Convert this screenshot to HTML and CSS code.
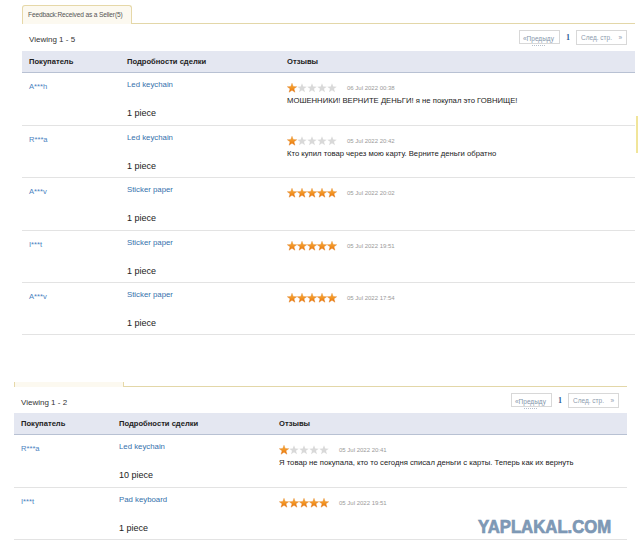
FILE: index.html
```html
<!DOCTYPE html>
<html lang="ru">
<head>
<meta charset="utf-8">
<title>Feedback</title>
<link rel="stylesheet" href="styles.css">
</head>
<body>
<svg class="defs" width="0" height="0" aria-hidden="true">
  <defs>
    <linearGradient id="gold" x1="0" y1="0" x2="0" y2="1">
      <stop offset="0" stop-color="#fbb540"/>
      <stop offset="1" stop-color="#e9750c"/>
    </linearGradient>
    <symbol id="star" viewBox="0 0 10 10">
      <polygon points="5,0.2 6.23,3.5 9.76,3.66 7,5.85 7.94,9.25 5,7.3 2.06,9.25 3,5.85 0.24,3.66 3.77,3.5"/>
    </symbol>
  </defs>
</svg>

<section class="panel panel-a">
  <div class="tabs"><div class="tab">Feedback:Received as a Seller(5)</div></div>
  <div class="bar">
    <div class="viewing">Viewing 1 - 5</div>
    <div class="pager">
      <span class="pg-prev">«Предыду</span>
      <span class="pg-num">1</span>
      <span class="pg-next"><span>След. стр.</span><span>»</span></span>
    </div>
  </div>
  <div class="thead"><div>Покупатель</div><div>Подробности сделки</div><div>Отзывы</div></div>

  <div class="row">
    <div class="buyer">A***h</div>
    <div class="deal"><a>Led keychain</a><div class="qty">1 piece</div></div>
    <div class="fb">
      <div class="fb-top"><span class="stars"><svg class="st on"><use href="#star"/></svg><svg class="st"><use href="#star"/></svg><svg class="st"><use href="#star"/></svg><svg class="st"><use href="#star"/></svg><svg class="st"><use href="#star"/></svg></span><span class="date">06 Jul 2022 00:38</span></div>
      <div class="comment">МОШЕННИКИ! ВЕРНИТЕ ДЕНЬГИ! я не покупал это ГОВНИЩЕ!</div>
    </div>
  </div>
  <div class="row">
    <div class="buyer">R***a</div>
    <div class="deal"><a>Led keychain</a><div class="qty">1 piece</div></div>
    <div class="fb">
      <div class="fb-top"><span class="stars"><svg class="st on"><use href="#star"/></svg><svg class="st"><use href="#star"/></svg><svg class="st"><use href="#star"/></svg><svg class="st"><use href="#star"/></svg><svg class="st"><use href="#star"/></svg></span><span class="date">05 Jul 2022 20:42</span></div>
      <div class="comment">Кто купил товар через мою карту. Верните деньги обратно</div>
    </div>
  </div>
  <div class="row">
    <div class="buyer">A***v</div>
    <div class="deal"><a>Sticker paper</a><div class="qty">1 piece</div></div>
    <div class="fb">
      <div class="fb-top"><span class="stars"><svg class="st on"><use href="#star"/></svg><svg class="st on"><use href="#star"/></svg><svg class="st on"><use href="#star"/></svg><svg class="st on"><use href="#star"/></svg><svg class="st on"><use href="#star"/></svg></span><span class="date">05 Jul 2022 20:02</span></div>
    </div>
  </div>
  <div class="row">
    <div class="buyer">I***t</div>
    <div class="deal"><a>Sticker paper</a><div class="qty">1 piece</div></div>
    <div class="fb">
      <div class="fb-top"><span class="stars"><svg class="st on"><use href="#star"/></svg><svg class="st on"><use href="#star"/></svg><svg class="st on"><use href="#star"/></svg><svg class="st on"><use href="#star"/></svg><svg class="st on"><use href="#star"/></svg></span><span class="date">05 Jul 2022 19:51</span></div>
    </div>
  </div>
  <div class="row">
    <div class="buyer">A***v</div>
    <div class="deal"><a>Sticker paper</a><div class="qty">1 piece</div></div>
    <div class="fb">
      <div class="fb-top"><span class="stars"><svg class="st on"><use href="#star"/></svg><svg class="st on"><use href="#star"/></svg><svg class="st on"><use href="#star"/></svg><svg class="st on"><use href="#star"/></svg><svg class="st on"><use href="#star"/></svg></span><span class="date">05 Jul 2022 17:54</span></div>
    </div>
  </div>
</section>

<section class="panel panel-b">
  <div class="tabs stub"><div class="tab"></div></div>
  <div class="bar">
    <div class="viewing">Viewing 1 - 2</div>
    <div class="pager">
      <span class="pg-prev">«Предыду</span>
      <span class="pg-num">1</span>
      <span class="pg-next"><span>След. стр.</span><span>»</span></span>
    </div>
  </div>
  <div class="thead"><div>Покупатель</div><div>Подробности сделки</div><div>Отзывы</div></div>

  <div class="row">
    <div class="buyer">R***a</div>
    <div class="deal"><a>Led keychain</a><div class="qty">10 piece</div></div>
    <div class="fb">
      <div class="fb-top"><span class="stars"><svg class="st on"><use href="#star"/></svg><svg class="st"><use href="#star"/></svg><svg class="st"><use href="#star"/></svg><svg class="st"><use href="#star"/></svg><svg class="st"><use href="#star"/></svg></span><span class="date">05 Jul 2022 20:41</span></div>
      <div class="comment">Я товар не покупала, кто то сегодня списал деньги с карты. Теперь как их вернуть</div>
    </div>
  </div>
  <div class="row">
    <div class="buyer">I***t</div>
    <div class="deal"><a>Pad keyboard</a><div class="qty">1 piece</div></div>
    <div class="fb">
      <div class="fb-top"><span class="stars"><svg class="st on"><use href="#star"/></svg><svg class="st on"><use href="#star"/></svg><svg class="st on"><use href="#star"/></svg><svg class="st on"><use href="#star"/></svg><svg class="st on"><use href="#star"/></svg></span><span class="date">05 Jul 2022 19:51</span></div>
    </div>
  </div>
</section>

<div class="edge-mark"></div>
<div class="watermark">YAPLAKAL.COM</div>
</body>
</html>
```
FILE: styles.css
```css
* { box-sizing: border-box; }

body {
  margin: 0;
  width: 640px;
  height: 559px;
  overflow: hidden;
  position: relative;
  background: #fff;
  color: #222;
  font-family: "Liberation Sans", Arial, sans-serif;
}

.defs { position: absolute; width: 0; height: 0; }

.panel { width: 613px; }
.panel-a { margin-left: 22px; padding-top: 5px; }
.panel-b { margin-left: 14px; margin-top: 47px; }

.tabs {
  display: flex;
  align-items: flex-end;
  height: 19px;
  border-bottom: 1px solid #e3d7a8;
}
.tab {
  width: 110px;
  height: 19px;
  margin-bottom: -1px;
  padding-left: 5px;
  border: 1px solid #e6d8a8;
  border-bottom: none;
  border-radius: 3px 3px 0 0;
  background: #fcf9f0;
  font-size: 6.6px;
  line-height: 17px;
  color: #555;
  white-space: nowrap;
  letter-spacing: -0.15px;
}
.tabs.stub { height: 5px; }
.tabs.stub .tab {
  height: 5px;
  border-top: none;
  border-radius: 0;
}

.bar {
  display: flex;
  justify-content: space-between;
  align-items: flex-start;
  height: 27px;
  padding: 0 8px 0 7px;
}
.panel-b .bar { height: 26px; }
.viewing {
  margin-top: 11px;
  font-size: 8px;
  line-height: 10px;
  color: #333;
}
.pager {
  display: flex;
  align-items: flex-start;
  margin-top: 6px;
}
.pg-prev {
  position: relative;
  display: block;
  width: 41px;
  height: 14px;
  padding: 3px 2px 0 3px;
  border: 1px solid #d8d8d8;
  font-size: 6.5px;
  line-height: 9px;
  color: #8595aa;
  white-space: nowrap;
}
.pg-prev::after {
  content: "";
  position: absolute;
  left: 12px;
  bottom: -3px;
  width: 13px;
  border-top: 1px dotted #b5bfcc;
}
.pg-num {
  margin: 3px 6px 0 6px;
  font-family: "Liberation Serif", serif;
  font-weight: bold;
  font-size: 8px;
  color: #2f5e97;
}
.pg-next {
  display: flex;
  justify-content: space-between;
  width: 51px;
  height: 15px;
  padding: 0 4px 0 4px;
  border: 1px solid #d8d8d8;
  font-size: 6.5px;
  line-height: 13px;
  color: #8d9bae;
}

.thead {
  display: grid;
  grid-template-columns: 98px 160px 1fr;
  height: 22px;
  background: #e4e7f1;
  border-bottom: 1px solid #b8c1d3;
  font-weight: bold;
  font-size: 7.6px;
  line-height: 21px;
  color: #222;
}
.thead > div { padding-left: 7px; }

.row {
  display: grid;
  grid-template-columns: 98px 160px 1fr;
  height: 52.3px;
  border-bottom: 1px solid #e3e3e3;
}
.thead + .row { height: 53px; }
.buyer {
  padding: 9px 0 0 7px;
  font-size: 7.6px;
  line-height: 10px;
  color: #4b83bf;
}
.deal { padding: 7px 0 0 7px; }
.deal a {
  display: block;
  font-size: 7.8px;
  line-height: 10px;
  color: #3570ac;
}
.qty {
  margin-top: 18px;
  font-size: 9px;
  line-height: 11px;
  color: #222;
}
.fb { padding: 10px 0 0 7px; }
.fb-top {
  display: flex;
  align-items: center;
  height: 10px;
}
.stars { display: flex; }
.st {
  width: 10px;
  height: 10px;
  fill: #d9d9d9;
}
.st.on { fill: url(#gold); stroke: #d9700c; stroke-width: 0.3; }
.date {
  margin-left: 10px;
  font-size: 6px;
  color: #9a9a9a;
}
.comment {
  margin-top: 3px;
  font-size: 7.7px;
  line-height: 10px;
  color: #222;
  white-space: nowrap;
}

.edge-mark {
  position: absolute;
  left: 636px;
  top: 116px;
  width: 2px;
  height: 37px;
  background: #f1e59a;
}
.watermark {
  position: absolute;
  left: 478px;
  top: 517px;
  font-size: 18px;
  font-weight: bold;
  color: #7f9ab7;
  -webkit-text-stroke: 0.7px #7a95b2;
  transform: scaleX(0.93);
  transform-origin: left center;
}
```
